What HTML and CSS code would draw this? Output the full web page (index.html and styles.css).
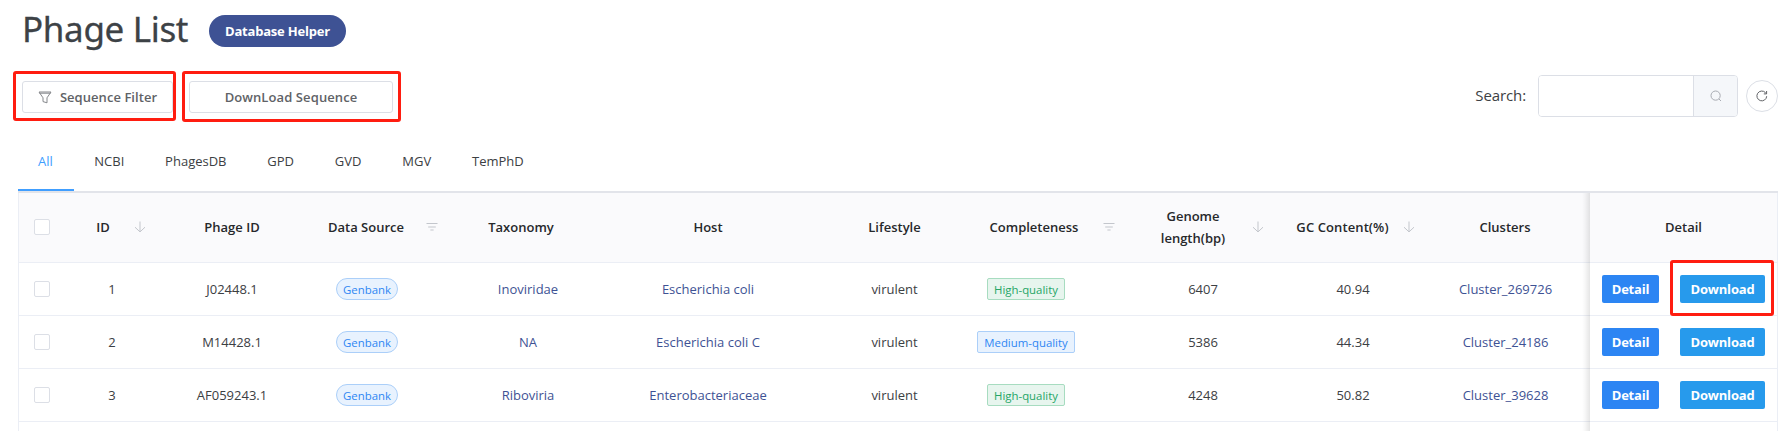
FILE: index.html
```html
<!DOCTYPE html>
<html lang="en">
<head>
<meta charset="utf-8">
<title>Phage List</title>
<link rel="stylesheet" href="styles.css">
</head>
<body>
<svg class="defs" width="0" height="0">
  <symbol id="arrow" viewBox="0 0 12 12"><path d="M6 .5v10.2M1 6.2l5 4.7 5-4.7"/></symbol>
  <symbol id="lines" viewBox="0 0 12 12"><path d="M.5 2.5h11M2.2 6h7.6M4.4 9h3.2"/></symbol>
</svg>
<header class="title-bar">
  <h1 class="title">Phage List</h1>
  <button class="helper">Database Helper</button>
</header>

<section class="toolbar">
  <div class="mark mark-filter">
    <button class="btn btn-filter">
      <svg class="funnel" viewBox="0 0 14 13"><path d="M1 1h12L9 6.8v5L5 10.6V6.8zM1.4 2.2h11.2"/></svg>
      Sequence Filter
    </button>
  </div>
  <div class="mark mark-sequence"><button class="btn btn-sequence">DownLoad Sequence</button></div>
  <div class="search">
    <label class="search-label" for="q">Search:</label>
    <div class="search-box">
      <input class="search-input" id="q" type="text">
      <button class="search-btn"><svg class="glass" viewBox="0 0 12 12"><circle cx="5.6" cy="5.6" r="4.6"/><path d="M9 9l2 2"/></svg></button>
    </div>
    <button class="refresh"><svg class="turn" viewBox="0 0 12 12"><path d="M10.7 6.2A4.9 4.9 0 1 1 9.4 2.6L10.3 3.6M10.6 1v2.9H7.8"/></svg></button>
  </div>
</section>

<nav class="tabs">
  <a class="tab active">All</a><a class="tab">NCBI</a><a class="tab">PhagesDB</a><a class="tab">GPD</a><a class="tab">GVD</a><a class="tab">MGV</a><a class="tab">TemPhD</a>
</nav>

<main class="table">
  <div class="row head">
    <div class="cell c-check"><i class="check"></i></div>
    <div class="cell h-id"><span class="label">ID</span><svg class="icon"><use href="#arrow"/></svg></div>
    <div class="cell"><span class="label">Phage ID</span></div>
    <div class="cell h-source"><span class="label">Data Source</span><svg class="icon"><use href="#lines"/></svg></div>
    <div class="cell h-tax"><span class="label">Taxonomy</span></div>
    <div class="cell"><span class="label">Host</span></div>
    <div class="cell c-life"><span class="label">Lifestyle</span></div>
    <div class="cell h-comp"><span class="label">Completeness</span><svg class="icon"><use href="#lines"/></svg></div>
    <div class="cell h-len"><span class="label">Genome length(bp)</span><svg class="icon"><use href="#arrow"/></svg></div>
    <div class="cell h-gc"><span class="label">GC Content(%)</span><svg class="icon"><use href="#arrow"/></svg></div>
    <div class="cell h-clu"><span class="label">Clusters</span></div>
    <div class="cell fixed"><span class="label">Detail</span></div>
  </div>
  <div class="row">
    <div class="cell c-check"><i class="check"></i></div>
    <div class="cell">1</div>
    <div class="cell">J02448.1</div>
    <div class="cell c-source"><span class="tag pill">Genbank</span></div>
    <div class="cell c-tax link">Inoviridae</div>
    <div class="cell link">Escherichia coli</div>
    <div class="cell c-life">virulent</div>
    <div class="cell c-comp"><span class="tag green">High-quality</span></div>
    <div class="cell">6407</div>
    <div class="cell">40.94</div>
    <div class="cell c-clu link">Cluster_269726</div>
    <div class="cell fixed actions"><button class="act detail">Detail</button><span class="spot"><button class="act download">Download</button><i class="spot-ring"></i></span></div>
  </div>
  <div class="row">
    <div class="cell c-check"><i class="check"></i></div>
    <div class="cell">2</div>
    <div class="cell">M14428.1</div>
    <div class="cell c-source"><span class="tag pill">Genbank</span></div>
    <div class="cell c-tax link">NA</div>
    <div class="cell link">Escherichia coli C</div>
    <div class="cell c-life">virulent</div>
    <div class="cell c-comp"><span class="tag">Medium-quality</span></div>
    <div class="cell">5386</div>
    <div class="cell">44.34</div>
    <div class="cell c-clu link">Cluster_24186</div>
    <div class="cell fixed actions"><button class="act detail">Detail</button><button class="act download">Download</button></div>
  </div>
  <div class="row">
    <div class="cell c-check"><i class="check"></i></div>
    <div class="cell">3</div>
    <div class="cell">AF059243.1</div>
    <div class="cell c-source"><span class="tag pill">Genbank</span></div>
    <div class="cell c-tax link">Riboviria</div>
    <div class="cell link">Enterobacteriaceae</div>
    <div class="cell c-life">virulent</div>
    <div class="cell c-comp"><span class="tag green">High-quality</span></div>
    <div class="cell">4248</div>
    <div class="cell">50.82</div>
    <div class="cell c-clu link">Cluster_39628</div>
    <div class="cell fixed actions"><button class="act detail">Detail</button><button class="act download">Download</button></div>
  </div>
  <div class="row last">
    <div class="cell"></div><div class="cell"></div><div class="cell"></div><div class="cell"></div><div class="cell"></div><div class="cell"></div><div class="cell"></div><div class="cell"></div><div class="cell"></div><div class="cell"></div><div class="cell"></div><div class="cell fixed"></div>
  </div>
</main>
</body>
</html>
```
FILE: styles.css
```css
* { box-sizing: border-box; }
body {
  margin: 0;
  height: 431px;
  overflow: hidden;
  background: #fff;
  color: #3c4043;
  font: 13px/22px "Open Sans", "Noto Sans", sans-serif;
}
button, input { font: inherit; margin: 0; padding: 0; }
svg { fill: none; stroke: currentColor; }
.defs { display: block; height: 0; }

.title-bar { display: flex; align-items: flex-start; height: 71px; padding-left: 22px; }
.title {
  margin: 5px 0 0;
  width: 187px;
  color: #3d4246;
  font: 400 35px/48px "Noto Sans", sans-serif;
  letter-spacing: -.35px;
  -webkit-text-stroke: .3px;
}
.helper {
  width: 137px;
  height: 32px;
  margin-top: 15px;
  border: 0;
  border-radius: 16px;
  background: #3e5294;
  color: #fff;
  font-weight: 700;
  letter-spacing: -.2px;
}

.toolbar { display: flex; align-items: flex-start; height: 68px; padding: 0 11px 0 13px; }
.mark { border: 3px solid #ff1d10; border-radius: 3px; }
.mark-filter { width: 163px; height: 50px; padding: 7px 0 0 6px; }
.mark-sequence { width: 219px; height: 51px; margin-left: 6px; padding: 7px 0 0 4px; }
.btn {
  display: flex;
  align-items: center;
  justify-content: center;
  height: 32px;
  border: 1px solid #dcdfe6;
  border-radius: 3px;
  background: #fff;
  color: #606266;
  font-weight: 600;
  letter-spacing: .05px;
}
.btn-filter { width: 151px; gap: 8px; }
.btn-sequence { width: 204px; letter-spacing: .1px; }
.funnel { width: 14px; height: 13px; stroke: #85878b; }
.search { display: flex; align-items: center; margin: 4px 0 0 auto; height: 42px; }
.search-label { margin: -2px 12px 0 0; font-size: 15px; letter-spacing: -.1px; }
.search-box {
  display: flex;
  width: 200px;
  height: 42px;
  border: 1px solid #dcdfe6;
  border-radius: 4px;
  overflow: hidden;
}
.search-input { width: 154px; border: 0; outline: 0; }
.search-btn {
  display: flex;
  align-items: center;
  justify-content: center;
  flex: 1;
  border: 0;
  border-left: 1px solid #dcdfe6;
  background: #f5f7fa;
  color: #a8abb2;
}
.glass { width: 12px; height: 12px; }
.refresh {
  display: flex;
  align-items: center;
  justify-content: center;
  width: 32px;
  height: 32px;
  margin-left: 8px;
  border: 1px solid #dcdfe6;
  border-radius: 50%;
  background: #fff;
  color: #606266;
}
.turn { width: 12px; height: 12px; }

.tabs {
  display: flex;
  gap: 40.8px;
  height: 54px;
  margin: 0 11px 0 18px;
  border-bottom: 2px solid #e2e4ea;
}
.tab { height: 52px; padding-top: 11px; }
.tab.active {
  width: 56px;
  margin-right: -20.5px;
  padding-left: 20px;
  border-bottom: 2px solid #409eff;
  color: #409eff;
}

.table { margin: 0 11px 0 18px; border-left: 1px solid #ebeef5; border-right: 1px solid #ebeef5; }
.row {
  display: grid;
  grid-template-columns: 47px 92px 148px 140px 154px 216px 150px 164px 146px 154px 160px 1fr;
  height: 53px;
}
.cell {
  display: flex;
  align-items: center;
  justify-content: center;
  border-bottom: 1px solid #ebeef5;
  text-align: center;
}
.head { height: 70px; }
.head .cell { padding-bottom: 1px; background: #fafafc; color: #26282b; font-weight: 600; }
.label { flex: 1; }
.icon { flex: none; width: 12px; height: 12px; margin: 0 1px; color: #c3c6cc; }
.h-id { padding: 0 11px 0 7px; }
.h-source { padding: 0 7px 0 1px; }
.h-tax { padding-right: 4px; }
.h-comp { padding-right: 14px; }
.h-len { padding: 0 11px 0 5px; }
.h-gc { padding: 0 14px 0 7px; letter-spacing: .1px; }
.h-clu { padding-right: 10px; }
.c-check { padding-right: 1px; }
.c-source { padding-right: 18px; }
.c-tax { padding-left: 10px; }
.c-life { padding-left: 7px; }
.c-comp { padding-right: 44px; }
.c-clu { padding-right: 9px; }
.link { color: #3e5294; }
.check { width: 16px; height: 16px; border: 1px solid #dcdfe6; border-radius: 2px; background: #fff; }
.tag {
  height: 22px;
  padding: 0 6.5px;
  border: 1px solid #abcff9;
  border-radius: 2px;
  background: #e8f2fe;
  color: #2e86f3;
  font-size: 11.4px;
  line-height: 21px;
}
.pill { padding: 0 6px; border-radius: 11px; }
.green { border-color: #a7dcc0; background: #e7f5ee; color: #25a566; }
.fixed { position: relative; background: #fff; }
.fixed::before {
  content: "";
  position: absolute;
  top: 0;
  bottom: -1px;
  left: -8px;
  width: 8px;
  background: linear-gradient(to left, rgba(0, 0, 0, .1), rgba(0, 0, 0, .03) 60%, transparent);
}
.actions { justify-content: flex-start; padding-left: 12px; gap: 21px; }
.act { height: 28px; border: 0; border-radius: 2px; color: #fff; font-weight: 700; letter-spacing: -.2px; }
.detail { width: 57px; background: #2c85f3; }
.download { width: 85px; background: #279aec; }
.spot { position: relative; display: flex; }
.spot-ring {
  position: absolute;
  inset: -15px -9px -13px -10px;
  border: 3px solid #ff1d10;
  border-radius: 3px;
}
.last { height: 9px; }
.last .cell { border-bottom: 0; }
```
